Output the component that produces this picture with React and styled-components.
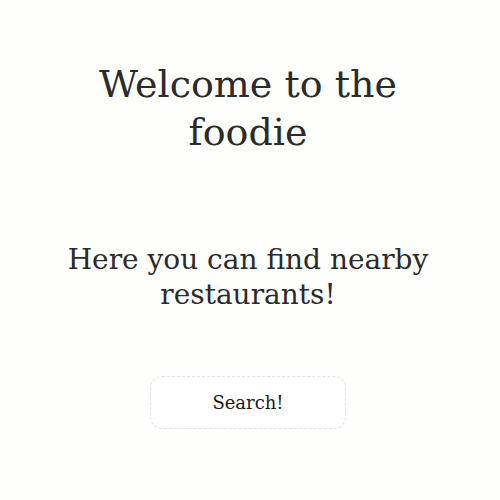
import React from 'react'
import styled, { createGlobalStyle } from 'styled-components'

const GlobalStyle = createGlobalStyle`
    html, body {
        margin : 0;
        padding : 0;
        background-color : #fefefd;
    }
    body {
        font-family : 'DejaVu Serif', 'Liberation Serif', serif;
        color : #2b2b2b;
    }
`;

const Page = styled.div`
    width : 496px;
    height : 500px;
    display : flex;
    flex-direction : column;
    align-items : center;
    text-align : center;
    padding-top : 60px;
    box-sizing : border-box;
`;

const Title = styled.h1`
    margin : 0;
    font-size : 38px;
    font-weight : 400;
    line-height : 48px;
    width : 320px;
`;

const Subtitle = styled.h2`
    margin : 86px 0 0;
    font-size : 28px;
    font-weight : 400;
    line-height : 35px;
    width : 380px;
`;

const SearchButton = styled.button`
    margin-top : 64px;
    width : 196px;
    height : 53px;
    background-color : #ffffff;
    border : 1px dashed #e2e2e2;
    border-radius : 12px;
    font-family : 'DejaVu Serif', 'Liberation Serif', serif;
    font-size : 18px;
    color : #1a1a1a;
    cursor : pointer;
`;

export default function App() {
    return (
        <>
            <GlobalStyle />
            <Page>
                <Title>Welcome to the foodie</Title>
                <Subtitle>Here you can find nearby restaurants!</Subtitle>
                <SearchButton>Search!</SearchButton>
            </Page>
        </>
    )
}
